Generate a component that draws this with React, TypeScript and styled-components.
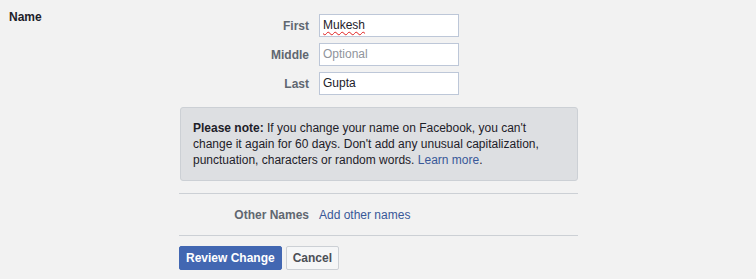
import styled, { createGlobalStyle } from "styled-components";

const GlobalStyle = createGlobalStyle`
  body {
    margin: 0;
    background-color: #f2f2f2;
    font-family: "Liberation Sans", Arial, sans-serif;
    font-size: 12px;
    color: #1d2129;
  }
`;

const StyledSection = styled.section`
  display: flex;
  padding-top: 9px;
  min-height: 279px;
  box-sizing: border-box;

  .section {
    &-title {
      width: 179px;
      padding-left: 9px;
      box-sizing: border-box;
      font-weight: bold;
      line-height: 16px;
    }
    &-body {
      width: 399px;
      padding-top: 5px;
    }
  }
`;

const FieldGrid = styled.div`
  display: grid;
  grid-template-columns: 130px 140px;
  column-gap: 10px;
  row-gap: 6px;
  align-items: center;
`;

const FieldLabel = styled.label`
  text-align: right;
  font-weight: bold;
  color: #606770;
`;

const InputWrap = styled.div`
  position: relative;
  display: flex;
`;

const FieldInput = styled.input`
  width: 100%;
  height: 23px;
  box-sizing: border-box;
  border: 1px solid #bdc7d8;
  background: #fff;
  padding: 3px 3px 4px;
  font-family: inherit;
  font-size: 12px;
  color: #1d2129;
  outline: none;

  &::placeholder {
    color: #90949c;
  }
`;

// spellcheck squiggle drawn over the misspelled word
const Squiggle = styled.span`
  position: absolute;
  left: 4px;
  top: 4px;
  font-size: 12px;
  line-height: 14px;
  color: transparent;
  text-decoration: underline wavy #e02020;
  text-decoration-thickness: 1px;
  text-underline-offset: 2px;
  pointer-events: none;
`;

const Note = styled.div`
  margin: 12px 0 0 1px;
  background-color: #dddfe2;
  border: 1px solid #ccd0d5;
  border-radius: 3px;
  padding: 12px 12px;
  line-height: 16px;

  b {
    font-weight: bold;
  }
`;

const Link = styled.a`
  color: #385898;
  text-decoration: none;
  cursor: pointer;
`;

const Divider = styled.hr<{ $gap?: number }>`
  border: none;
  border-top: 1px solid #ccd0d5;
  margin: ${(p) => p.$gap ?? 0}px 0 0;
`;

const OtherNamesRow = styled.div`
  display: grid;
  grid-template-columns: 130px auto;
  column-gap: 10px;
  padding: 14px 0 13px;
  line-height: 14px;
`;

const Actions = styled.div`
  display: flex;
  gap: 4px;
  padding-top: 10px;
`;

const Button = styled.button<{ $primary?: boolean }>`
  height: 24px;
  padding: 0 6px;
  border-radius: 2px;
  font-family: inherit;
  font-size: 12px;
  font-weight: bold;
  cursor: pointer;
  border: 1px solid ${(p) => (p.$primary ? "#4267b2" : "#ccd0d5")};
  background-color: ${(p) => (p.$primary ? "#4267b2" : "#f5f6f7")};
  color: ${(p) => (p.$primary ? "#fff" : "#4b4f56")};
`;

const App = () => {
  return (
    <>
      <GlobalStyle />
      <StyledSection>
        <div className="section-title">Name</div>
        <div className="section-body">
          <FieldGrid>
            <FieldLabel>First</FieldLabel>
            <InputWrap>
              <FieldInput defaultValue="Mukesh" spellCheck={false} />
              <Squiggle aria-hidden>Mukesh</Squiggle>
            </InputWrap>
            <FieldLabel>Middle</FieldLabel>
            <FieldInput placeholder="Optional" />
            <FieldLabel>Last</FieldLabel>
            <FieldInput defaultValue="Gupta" />
          </FieldGrid>

          <Note>
            <b>Please note:</b> If you change your name on Facebook, you can't
            change it again for 60 days. Don't add any unusual capitalization,
            punctuation, characters or random words. <Link>Learn more</Link>.
          </Note>

          <Divider $gap={12} />
          <OtherNamesRow>
            <FieldLabel>Other Names</FieldLabel>
            <Link>Add other names</Link>
          </OtherNamesRow>
          <Divider />

          <Actions>
            <Button $primary>Review Change</Button>
            <Button>Cancel</Button>
          </Actions>
        </div>
      </StyledSection>
    </>
  );
};

export default App;
